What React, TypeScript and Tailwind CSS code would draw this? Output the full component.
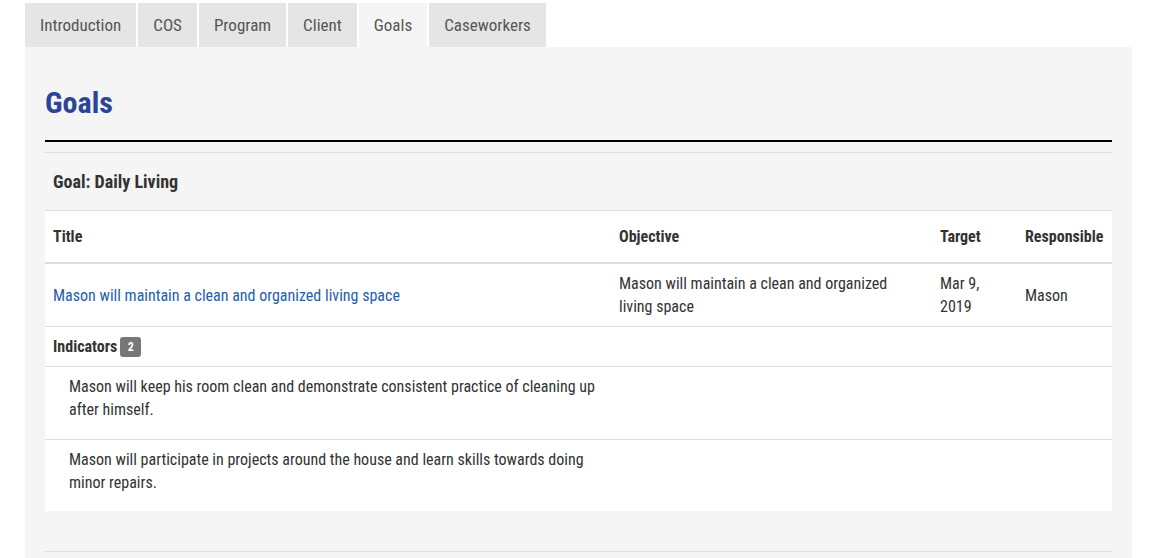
import React from "react";

const tabs = ["Introduction", "COS", "Program", "Client", "Goals", "Caseworkers"];

const indicators = [
  "Mason will keep his room clean and demonstrate consistent practice of cleaning up after himself.",
  "Mason will participate in projects around the house and learn skills towards doing minor repairs.",
];

export default function App() {
  return (
    <div
      className="min-h-screen bg-white text-[#333] text-[16px] leading-[23px]"
      style={{ fontFamily: '"Roboto Condensed", "Liberation Sans Narrow", Roboto, sans-serif' }}
    >
      <div className="pl-[25px] pr-[32px] pt-[3px]">
        <div className="flex gap-[2px]">
          {tabs.map((t) => (
            <div
              key={t}
              className={`h-[44px] px-[15px] flex items-center text-[17px] text-[#555] ${
                t === "Goals" ? "bg-[#f5f5f5]" : "bg-[#e5e5e5]"
              }`}
            >
              {t}
            </div>
          ))}
        </div>

        <div className="bg-[#f5f5f5] px-[20px] pt-[40px] pb-[6px]">
          <h1 className="text-[30px] leading-[32px] font-bold text-[#2b4596]">Goals</h1>
          <div className="mt-[21px] h-[2px] bg-black" />

          <div className="mt-[10px] border-t border-[#ddd]">
            <div className="h-[57px] px-[8px] pb-[1px] flex items-center font-bold text-[18px]">Goal: Daily Living</div>

            <div className="bg-white border-t border-[#ddd]">
              <div className="grid grid-cols-[566px_321px_85px_95px] h-[53px] items-center font-bold border-b-2 border-[#ddd]">
                <div className="px-[8px]">Title</div>
                <div className="px-[8px]">Objective</div>
                <div className="px-[8px]">Target</div>
                <div className="px-[8px]">Responsible</div>
              </div>

              <div className="grid grid-cols-[566px_321px_85px_95px] h-[63px] items-center border-b border-[#ddd]">
                <div className="px-[8px] text-[#1f5ea8]">Mason will maintain a clean and organized living space</div>
                <div className="px-[8px]">Mason will maintain a clean and organized living space</div>
                <div className="px-[8px]">Mar 9, 2019</div>
                <div className="px-[8px]">Mason</div>
              </div>

              <div className="h-[40px] px-[8px] flex items-center border-b border-[#ddd] font-bold">
                Indicators
                <span className="ml-[3px] inline-flex items-center justify-center h-[20px] min-w-[21px] px-[7px] rounded-[3px] bg-[#777] text-white text-[12px] leading-none">
                  2
                </span>
              </div>

              {indicators.map((txt, i) => (
                <div
                  key={i}
                  className={`grid grid-cols-[566px_1fr] ${i === 0 ? "h-[73px] border-b border-[#ddd]" : "h-[71px]"}`}
                >
                  <div className="pl-[24px] pr-[8px] pt-[8px]">{txt}</div>
                  <div />
                </div>
              ))}
            </div>
          </div>

          <div className="mt-[40px] border-t border-[#ddd] h-[20px]" />
        </div>
      </div>
    </div>
  );
}
